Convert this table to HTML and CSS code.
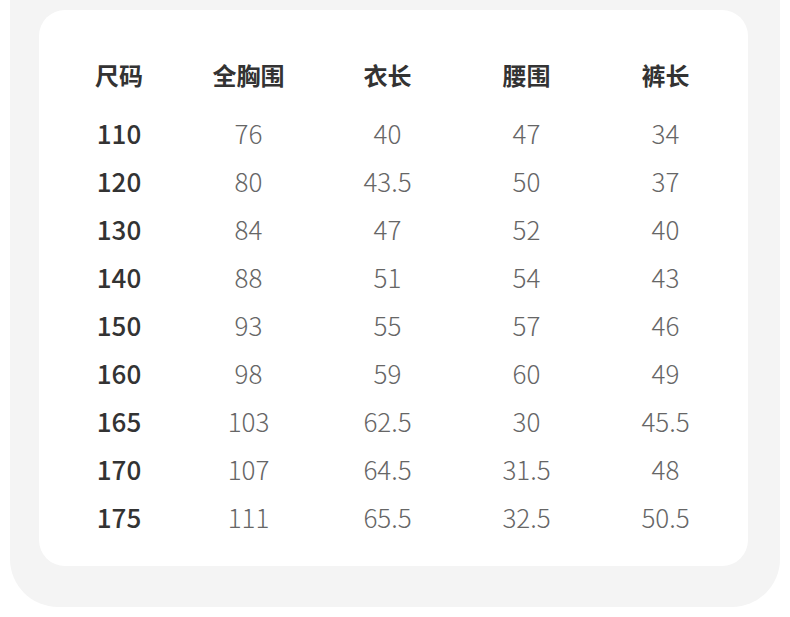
FILE: index.html
```html
<!DOCTYPE html>
<html lang="zh-CN">
<head>
<meta charset="utf-8">
<title>尺码表</title>
<link rel="stylesheet" href="styles.css">
</head>
<body>
<div class="frame">
  <div class="card">
    <div class="table">
      <div class="row head">
        <div class="cell">尺码</div>
        <div class="cell">全胸围</div>
        <div class="cell">衣长</div>
        <div class="cell">腰围</div>
        <div class="cell">裤长</div>
      </div>
      <div class="row"><div class="cell size">110</div><div class="cell">76</div><div class="cell">40</div><div class="cell">47</div><div class="cell">34</div></div>
      <div class="row"><div class="cell size">120</div><div class="cell">80</div><div class="cell">43.5</div><div class="cell">50</div><div class="cell">37</div></div>
      <div class="row"><div class="cell size">130</div><div class="cell">84</div><div class="cell">47</div><div class="cell">52</div><div class="cell">40</div></div>
      <div class="row"><div class="cell size">140</div><div class="cell">88</div><div class="cell">51</div><div class="cell">54</div><div class="cell">43</div></div>
      <div class="row"><div class="cell size">150</div><div class="cell">93</div><div class="cell">55</div><div class="cell">57</div><div class="cell">46</div></div>
      <div class="row"><div class="cell size">160</div><div class="cell">98</div><div class="cell">59</div><div class="cell">60</div><div class="cell">49</div></div>
      <div class="row"><div class="cell size">165</div><div class="cell">103</div><div class="cell">62.5</div><div class="cell">30</div><div class="cell">45.5</div></div>
      <div class="row"><div class="cell size">170</div><div class="cell">107</div><div class="cell">64.5</div><div class="cell">31.5</div><div class="cell">48</div></div>
      <div class="row"><div class="cell size">175</div><div class="cell">111</div><div class="cell">65.5</div><div class="cell">32.5</div><div class="cell">50.5</div></div>
    </div>
  </div>
</div>
</body>
</html>
```

FILE: styles.css
```css
html, body {
  margin: 0;
  padding: 0;
  background: #ffffff;
}

body {
  font-family: "Noto Sans CJK SC", "Noto Sans", sans-serif;
  width: 790px;
  height: 617px;
  overflow: hidden;
}

.frame {
  margin-left: 10px;
  width: 770px;
  height: 607px;
  box-sizing: border-box;
  padding: 10px 32px 0 29px;
  background: #f4f4f4;
  border-radius: 0 0 48px 48px;
}

.card {
  height: 556px;
  box-sizing: border-box;
  background: #ffffff;
  border-radius: 26px;
  padding: 41px 0 0 20px;
}

.table {
  display: flex;
  flex-direction: column;
}

.row {
  display: grid;
  grid-template-columns: 120px repeat(4, 139px);
  height: 48px;
  align-items: center;
}

.row.head {
  margin-bottom: 10px;
}

.cell {
  text-align: center;
  line-height: 48px;
  font-size: 26px;
  font-weight: 300;
  color: #666666;
}

.head .cell {
  font-size: 24px;
  font-weight: 700;
  color: #333333;
}

.cell.size {
  font-size: 26px;
  font-weight: 500;
  color: #333333;
}
```
